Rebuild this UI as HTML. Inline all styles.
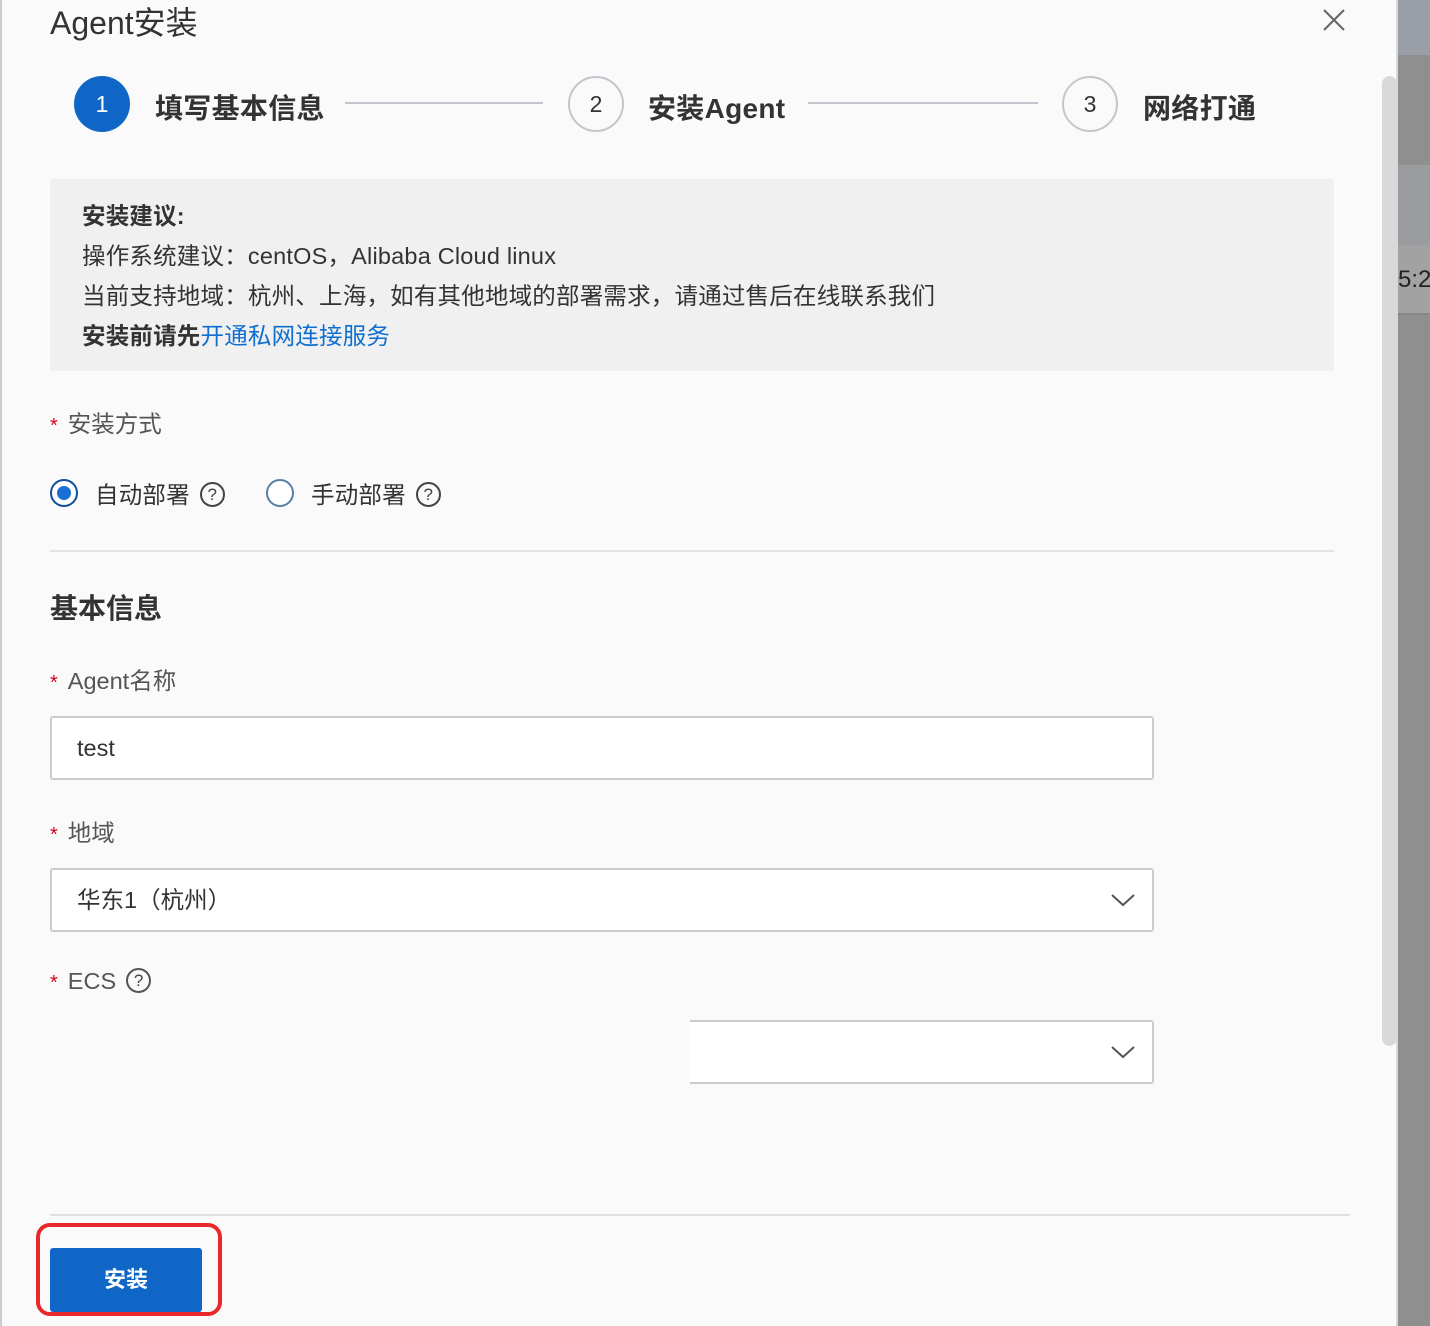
<!DOCTYPE html>
<html><head><meta charset="utf-8"><style>
*{margin:0;padding:0;box-sizing:border-box}
body{width:1430px;height:1326px;overflow:hidden;position:relative;background:#fafafa;font-family:"Liberation Sans","Noto Sans CJK SC",sans-serif;color:#333}
.a{position:absolute;white-space:nowrap}
.back{position:absolute;left:1398px;top:0;width:32px;height:1326px;background:#8f8f8f}
.circ{position:absolute;width:56px;height:56px;border-radius:50%;text-align:center;line-height:56px;font-size:23px}
.line{position:absolute;height:2px;background:#c3c6cc;top:102px}
.step{position:absolute;top:87px;font-size:28px;font-weight:bold;color:#333;letter-spacing:0.3px}
.lbl{position:absolute;font-size:23.5px;color:#555}
.lbl b{color:#d9001b;font-weight:normal;margin-right:10px;font-size:20px}
.inp{position:absolute;left:50px;width:1104px;height:64px;border:2px solid #c9ccd1;border-radius:3px;background:#fff;font-size:23.5px;padding-left:25px;line-height:60px;color:#333}
.q{display:inline-block;width:25px;height:25px;border:2px solid #444;border-radius:50%;font-size:17px;line-height:21px;text-align:center;vertical-align:middle;margin-left:10px;color:#444;position:relative;top:-2px}
.n{font-size:23.5px;color:#333;letter-spacing:0.2px}
</style></head><body>
<div class="back">
 <div style="position:absolute;top:0;height:55px;width:100%;background:#9a9fa7"></div>
 <div style="position:absolute;top:165px;height:80px;width:100%;background:#9a9ca0"></div>
 <div style="position:absolute;top:245px;height:70px;width:100%;background:#a2a2a2;border-bottom:2px solid #888"></div>
 <div class="a" style="top:266px;left:0;font-size:24px;color:#222">5:2</div>
</div>
<div style="position:absolute;left:0;top:0;width:2px;height:1326px;background:#c9ccd3"></div>
<div style="position:absolute;left:1396px;top:0;width:2px;height:1326px;background:#d5d8dd"></div>
<div style="position:absolute;left:1382px;top:76px;width:15px;height:970px;background:#d9d9d9;border-radius:8px"></div>

<div class="a" style="left:50px;top:-2px;font-size:32px;color:#333">Agent安装</div>
<svg class="a" style="left:1322px;top:8px" width="24" height="24"><path d="M2 2L22 22M22 2L2 22" stroke="#666" stroke-width="2"/></svg>

<div class="circ" style="left:74px;top:76px;background:#0f66c6;color:#fff">1</div>
<div class="step" style="left:155px">填写基本信息</div>
<div class="line" style="left:345px;width:198px"></div>
<div class="circ" style="left:568px;top:76px;border:2px solid #c3c6cc;line-height:52px">2</div>
<div class="step" style="left:648px">安装Agent</div>
<div class="line" style="left:808px;width:230px"></div>
<div class="circ" style="left:1062px;top:76px;border:2px solid #c3c6cc;line-height:52px">3</div>
<div class="step" style="left:1143px">网络打通</div>

<div style="position:absolute;left:50px;top:179px;width:1284px;height:192px;background:#f0f0f0;border-radius:3px"></div>
<div class="a n" style="left:82px;top:197px;font-weight:bold">安装建议:</div>
<div class="a n" style="left:82px;top:237px">操作系统建议：centOS，Alibaba Cloud linux</div>
<div class="a n" style="left:82px;top:277px">当前支持地域：杭州、上海，如有其他地域的部署需求，请通过售后在线联系我们</div>
<div class="a n" style="left:82px;top:317px"><b>安装前请先</b><span style="color:#0f6fd0">开通私网连接服务</span></div>

<div class="lbl" style="left:50px;top:405px"><b>*</b>安装方式</div>
<div class="a" style="left:50px;top:479px;width:28px;height:28px;border:2px solid #0f4f99;border-radius:50%;background:#fff"><div style="position:absolute;left:5px;top:5px;width:14px;height:14px;border-radius:50%;background:#1a6fd4"></div></div>
<div class="a n" style="left:95px;top:476px">自动部署<span class="q">?</span></div>
<div class="a" style="left:266px;top:479px;width:28px;height:28px;border:2px solid #5a7fa5;border-radius:50%;background:#fff"></div>
<div class="a n" style="left:311px;top:476px">手动部署<span class="q">?</span></div>

<div style="position:absolute;left:50px;top:550px;width:1284px;height:2px;background:#e3e3e3"></div>
<div class="a" style="left:50px;top:587px;font-size:28px;font-weight:bold;color:#333">基本信息</div>

<div class="lbl" style="left:50px;top:662px"><b>*</b>Agent名称</div>
<div class="inp" style="top:716px">test</div>
<div class="lbl" style="left:50px;top:814px"><b>*</b>地域</div>
<div class="inp" style="top:868px">华东1（杭州）
 <svg style="position:absolute;right:16px;top:22px" width="26" height="16"><path d="M2 3L13 13L24 3" stroke="#555" stroke-width="2" fill="none"/></svg></div>
<div class="lbl" style="left:50px;top:968px"><b>*</b>ECS<span class="q" style="border-color:#555">?</span></div>
<div class="inp" style="top:1020px;border-left-color:#eee">
 <div style="position:absolute;left:-2px;top:-2px;width:640px;height:64px;background:#fbfbfb"></div>
 <svg style="position:absolute;right:16px;top:22px" width="26" height="16"><path d="M2 3L13 13L24 3" stroke="#555" stroke-width="2" fill="none"/></svg></div>

<div style="position:absolute;left:50px;top:1214px;width:1300px;height:2px;background:#e0e0e0"></div>
<div style="position:absolute;left:36px;top:1223px;width:186px;height:93px;border:4px solid #e8282b;border-radius:14px"></div>
<div style="position:absolute;left:50px;top:1248px;width:152px;height:64px;background:#0f66c6;border-radius:3px;color:#fff;font-size:22px;font-weight:bold;text-align:center;line-height:64px">安装</div>
</body></html>
